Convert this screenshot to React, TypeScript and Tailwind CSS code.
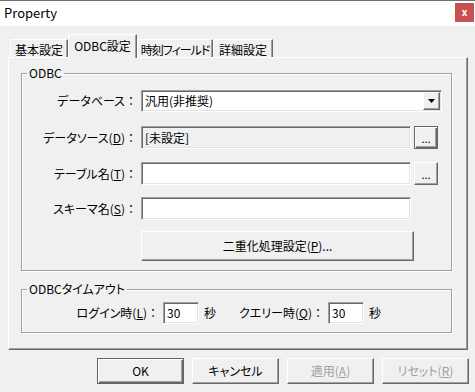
import React from "react";

const sunken =
  "border border-t-[#a0a0a0] border-l-[#a0a0a0] border-b-white border-r-white shadow-[inset_1px_1px_0_#696969,inset_-1px_-1px_0_#e3e3e3]";
const raised =
  "border border-t-white border-l-white border-b-[#696969] border-r-[#696969] shadow-[inset_-1px_-1px_0_#a0a0a0] bg-[#f0f0f0]";
const defaultBtn =
  "border border-[#646464] shadow-[inset_1px_1px_0_#fff,inset_-1px_-1px_0_#696969,inset_-2px_-2px_0_#a0a0a0] bg-[#f0f0f0]";
const palt = "[font-feature-settings:'palt']";

function Label({ text, mn, width }: { text: string; mn?: string; width: string }) {
  return (
    <div className={`${width} shrink-0 text-right ${palt} whitespace-nowrap`}>
      {text}
      {mn && (
        <>
          (<u>{mn}</u>)
        </>
      )}
      <span className="inline-block w-[12px] text-center">：</span>
    </div>
  );
}

function Group({ title, className, children }: { title: string; className: string; children: React.ReactNode }) {
  return (
    <fieldset className={`border border-[#a0a0a0] shadow-[1px_1px_0_#fff,inset_1px_1px_0_#fff] ${className}`}>
      <legend className={`ml-[5px] px-[2px] leading-[16px] ${palt}`}>{title}</legend>
      {children}
    </fieldset>
  );
}

function DotsButton({ isDefault }: { isDefault?: boolean }) {
  return (
    <div
      className={`ml-[3px] w-[24px] h-[23px] flex items-center justify-center text-[11px] leading-none pt-[2px] ${
        isDefault ? defaultBtn : raised
      }`}
    >
      ...
    </div>
  );
}

const tabs = [
  { label: "基本設定", w: "w-[58px]", track: "" },
  { label: "ODBC設定", w: "w-[69px]", track: "", active: true },
  { label: "時刻フィールド", w: "w-[76px]", track: "tracking-[-1px]" },
  { label: "詳細設定", w: "w-[60px]", track: "" },
];

const buttons = [
  { label: "OK", isDefault: true },
  { label: "キャンセル" },
  { label: "適用", mn: "A", disabled: true },
  { label: "リセット", mn: "R", disabled: true },
];

export default function App() {
  return (
    <div className="w-[475px] h-[392px] bg-[#f0f0f0] flex flex-col text-[12px] text-black font-['Noto_Sans_CJK_JP',sans-serif] overflow-hidden">
      {/* title bar */}
      <div className="h-[26px] shrink-0 bg-white border-t border-[#707070] flex items-start justify-between">
        <span className="pl-[4px] pt-[3px] text-[13px] leading-[18px]">Property</span>
        <div className="mt-[2px] mr-[1px] w-[19px] h-[19px] bg-[#c75050] text-white flex items-center justify-center text-[10px] font-bold leading-none pb-[1px]">
          x
        </div>
      </div>

      {/* tabs */}
      <div className="ml-[8px] mt-[8px] pl-[2px] h-[23px] flex items-end relative z-10">
        {tabs.map((t) =>
          t.active ? (
            <div
              key={t.label}
              className={`${t.w} h-[24px] -mb-[1px] bg-[#f0f0f0] border-t border-l border-white border-r border-r-[#696969] shadow-[inset_-1px_0_0_#a0a0a0] flex justify-center pt-[3px] leading-[16px] whitespace-nowrap ${palt}`}
            >
              {t.label}
            </div>
          ) : (
            <div
              key={t.label}
              className={`${t.w} h-[18px] border-t border-l border-white border-r border-r-[#696969] shadow-[inset_-1px_0_0_#a0a0a0] flex justify-center pt-[2px] leading-[16px] whitespace-nowrap ${t.track} ${palt}`}
            >
              {t.label}
            </div>
          )
        )}
      </div>

      {/* panel */}
      <div className="ml-[8px] w-[460px] h-[293px] shrink-0 border border-t-white border-l-white border-b-[#696969] border-r-[#696969] shadow-[inset_-1px_-1px_0_#a0a0a0] flex flex-col">
        <Group title="ODBC" className="ml-[12px] mt-[7px] w-[431px] pb-[9px]">
          <div className="flex items-center mt-[9px]">
            <Label text="データベース" width="w-[115px]" />
            <div className={`ml-[4px] w-[301px] h-[22px] bg-white flex items-center ${sunken}`}>
              <span className={`flex-1 pl-[3px] ${palt}`}>汎用(非推奨)</span>
              <div className={`mr-[1px] w-[17px] h-[18px] flex items-center justify-center ${raised}`}>
                <svg width="7" height="4" viewBox="0 0 7 4">
                  <polygon points="0,0 7,0 3.5,4" fill="#000" />
                </svg>
              </div>
            </div>
          </div>
          <div className="flex items-center mt-[14px]">
            <Label text="データソース" mn="D" width="w-[115px]" />
            <div className={`ml-[4px] w-[270px] h-[23px] bg-[#f0f0f0] flex items-center pl-[3px] ${sunken}`}>
              [未設定]
            </div>
            <DotsButton isDefault />
          </div>
          <div className="flex items-center mt-[13px]">
            <Label text="テーブル名" mn="T" width="w-[115px]" />
            <div className={`ml-[4px] w-[270px] h-[23px] bg-white ${sunken}`} />
            <DotsButton />
          </div>
          <div className="flex items-center mt-[12px]">
            <Label text="スキーマ名" mn="S" width="w-[115px]" />
            <div className={`ml-[4px] w-[270px] h-[23px] bg-white ${sunken}`} />
          </div>
          <div className={`mt-[11px] ml-[119px] w-[273px] h-[30px] flex items-center justify-center ${raised}`}>
            二重化処理設定(<u>P</u>)...
          </div>
        </Group>

        <Group title="ODBCタイムアウト" className="ml-[12px] mt-[10px] w-[431px] pb-[8px]">
          <div className="flex items-center mt-[5px]">
            <Label text="ログイン時" mn="L" width="w-[137px]" />
            <div className={`ml-[4px] w-[36px] h-[22px] bg-white pl-[3px] flex items-center ${sunken}`}>30</div>
            <span className="ml-[5px] w-[12px]">秒</span>
            <Label text="クエリー時" mn="Q" width="w-[108px]" />
            <div className={`ml-[4px] w-[36px] h-[22px] bg-white pl-[3px] flex items-center ${sunken}`}>30</div>
            <span className="ml-[5px]">秒</span>
          </div>
        </Group>
      </div>

      {/* buttons */}
      <div className="mt-[8px] pr-[6px] flex justify-end gap-[8px]">
        {buttons.map((b) => (
          <div
            key={b.label}
            className={`w-[87px] h-[26px] flex items-center justify-center ${palt} ${
              b.isDefault ? defaultBtn : raised
            } ${b.disabled ? "text-[#a0a0a0]" : ""}`}
          >
            {b.label}
            {b.mn && (
              <>
                (<u>{b.mn}</u>)
              </>
            )}
          </div>
        ))}
      </div>
    </div>
  );
}
